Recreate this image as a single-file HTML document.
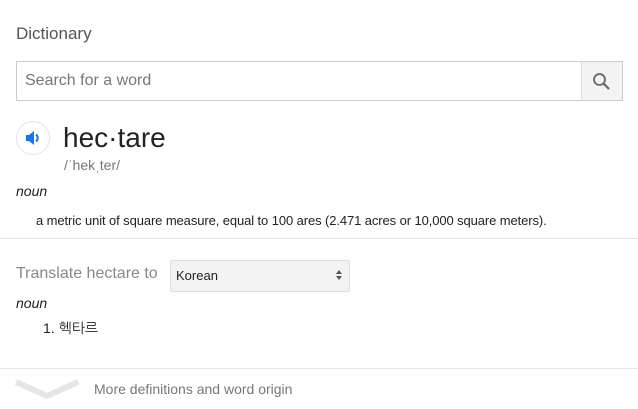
<!DOCTYPE html>
<html><head><style>
body{margin:0;width:638px;height:409px;background:#fff;font-family:"Liberation Sans",Arial,sans-serif;position:relative;overflow:hidden}
.a{position:absolute}
</style></head><body>
<div class="a" style="left:16px;top:24px;font-size:17px;color:#555">Dictionary</div>
<div class="a" style="left:16px;top:61px;width:564px;height:38px;border:1px solid #ccc;box-sizing:content-box;"></div>
<div class="a" style="left:25px;top:72px;font-size:16px;color:#777">Search for a word</div>
<div class="a" style="left:581px;top:61px;width:40px;height:38px;background:#f3f3f3;border:1px solid #ccc;border-left:1px solid #ddd"></div>
<svg class="a" style="left:591px;top:71px" width="22" height="22" viewBox="0 0 22 22"><circle cx="8.5" cy="8.5" r="5.5" fill="none" stroke="#666" stroke-width="1.8"/><line x1="12.5" y1="12.5" x2="18" y2="18" stroke="#666" stroke-width="2.2"/></svg>
<div class="a" style="left:16px;top:121px;width:34px;height:34px;border-radius:50%;border:1px solid #e4e4e4;box-sizing:border-box"></div>
<svg class="a" style="left:24px;top:129px" width="18" height="18" viewBox="0 0 18 18"><path d="M2 6h3l5-4v14l-5-4H2z" fill="#1a73e8"/><path d="M12 5.5a4.5 4.5 0 0 1 0 7" fill="none" stroke="#1a73e8" stroke-width="2"/></svg>
<div class="a" style="left:63px;top:122px;font-size:28px;color:#222">hec·tare</div>
<div class="a" style="left:64px;top:157px;font-size:14px;color:#777">/ˈhekˌter/</div>
<div class="a" style="left:16px;top:183px;font-size:14px;color:#222;font-style:italic">noun</div>
<div class="a" style="left:36px;top:213px;font-size:13px;color:#222;letter-spacing:-0.1px">a metric unit of square measure, equal to 100 ares (2.471 acres or 10,000 square meters).</div>
<div class="a" style="left:0;top:238px;width:638px;height:1px;background:#e8e8e8"></div>
<div class="a" style="left:16px;top:265px;font-size:16px;color:#888">Translate hectare to</div>
<div class="a" style="left:170px;top:260px;width:178px;height:30px;background:#f3f3f3;border:1px solid #ddd"></div>
<div class="a" style="left:176px;top:268px;font-size:13px;color:#222">Korean</div>
<svg class="a" style="left:335px;top:269px" width="8" height="12" viewBox="0 0 8 12"><path d="M4 1L7 5H1z M4 11L7 7H1z" fill="#555"/></svg>
<div class="a" style="left:16px;top:295px;font-size:14px;color:#222;font-style:italic">noun</div>
<div class="a" style="left:43px;top:320px;font-size:14px;color:#222;font-family:'Liberation Sans','NanumGothic',sans-serif">1. 헥타르</div>
<div class="a" style="left:0;top:368px;width:638px;height:1px;background:#e8e8e8"></div>
<svg class="a" style="left:14px;top:376px" width="66" height="24" viewBox="0 0 66 24"><path d="M2 6L33 20L64 6" fill="none" stroke="#e6e6e6" stroke-width="6"/></svg>
<div class="a" style="left:94px;top:381px;font-size:14px;color:#777">More definitions and word origin</div>
</body></html>
